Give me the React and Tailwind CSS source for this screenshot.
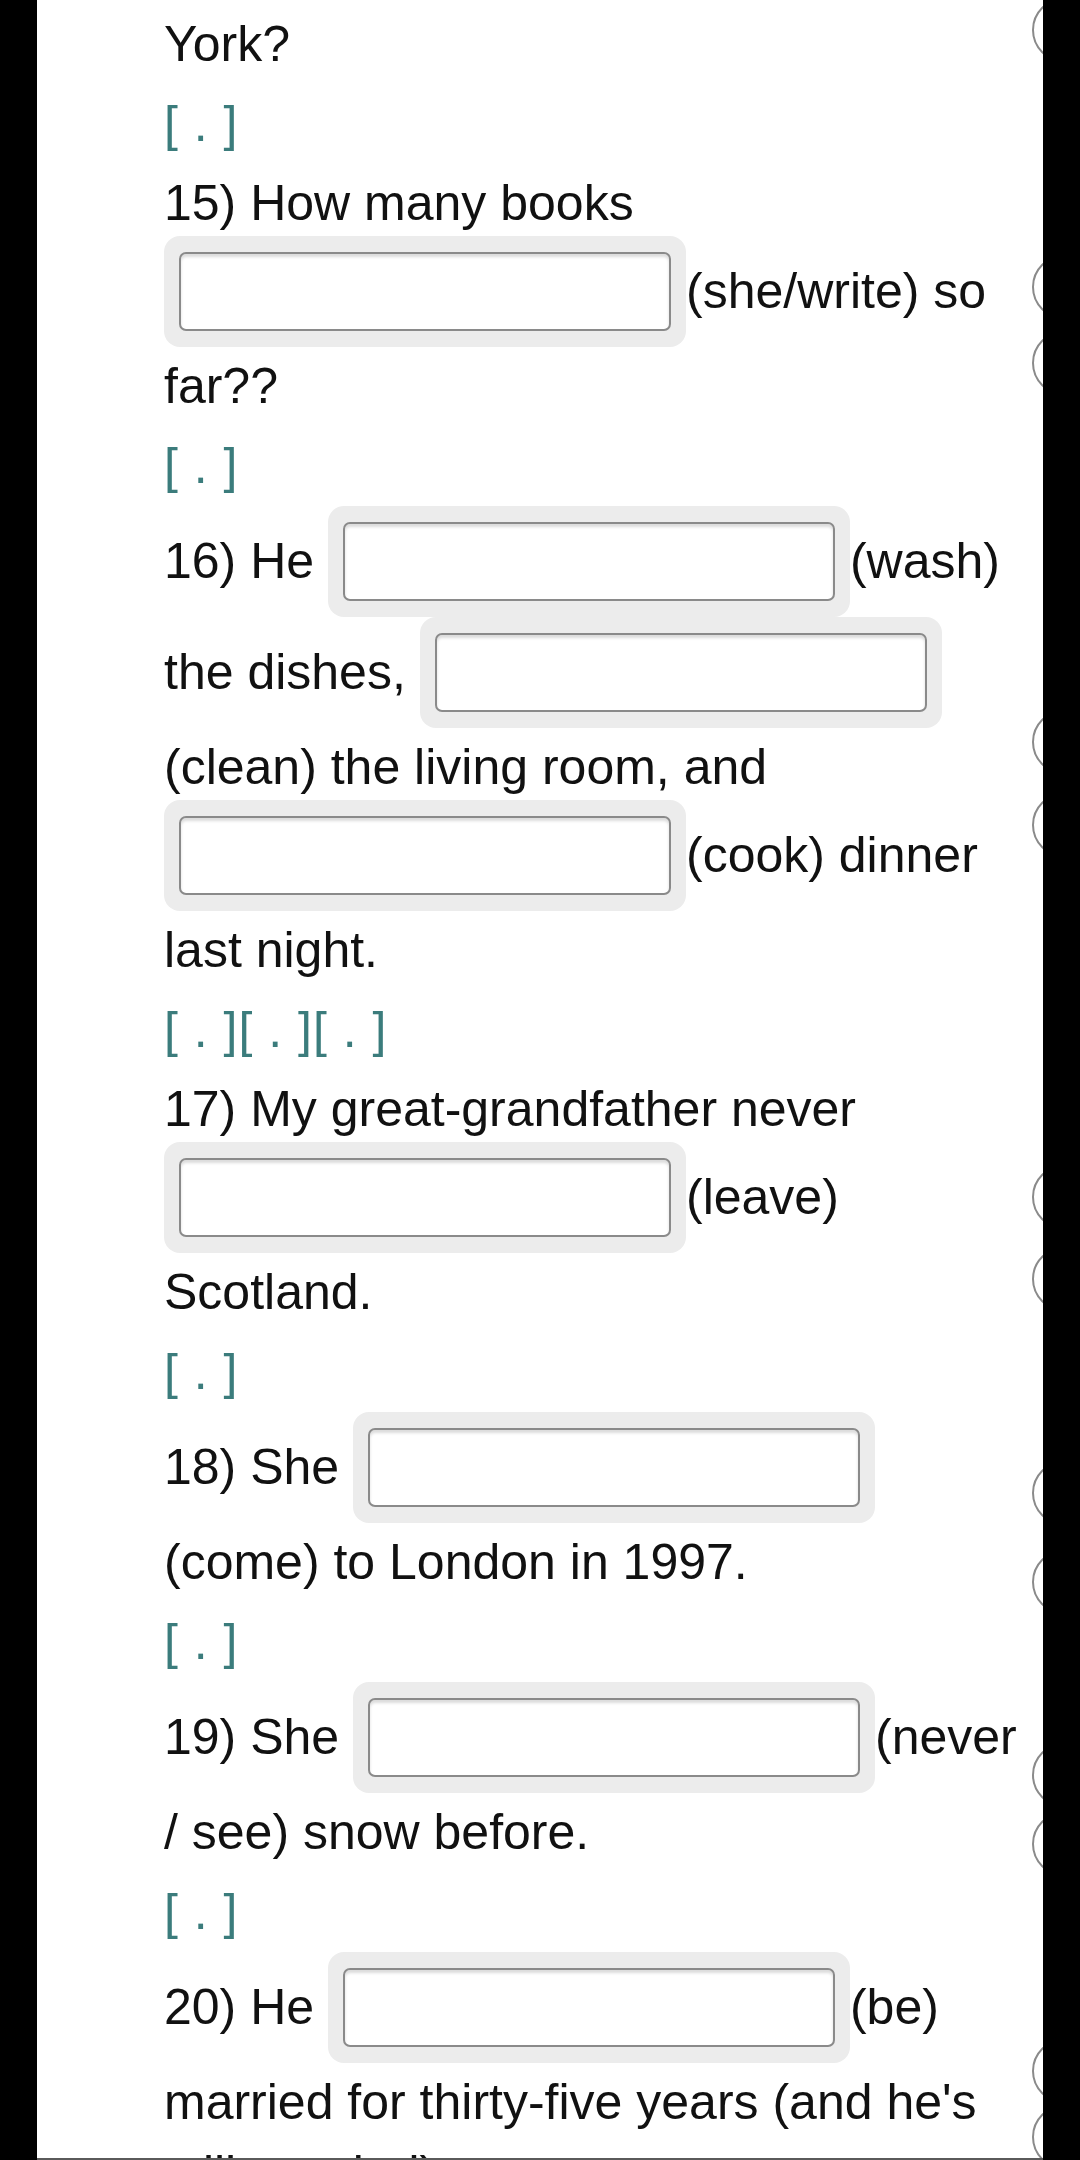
import React from "react";

function Blank() {
  return (
    <span className="relative -top-[3px] inline-block align-middle px-[15px] py-[16px] rounded-[16px] bg-[#ececec]">
      <input
        type="text"
        aria-label="answer"
        readOnly
        className="block w-[492px] h-[79px] rounded-[7px] border-2 border-[#8a8a8a] bg-white shadow-[inset_0_3px_3px_rgba(0,0,0,0.14)] outline-none"
      />
    </span>
  );
}

function Marks({ children }) {
  return (
    <div className="mt-[8px] mb-[7px] text-[#3b7c7c] tracking-[1px] whitespace-pre leading-[72px]">
      {children}
    </div>
  );
}

function Q({ children }) {
  return <p className="leading-[72px]">{children}</p>;
}

function Ring({ className }) {
  return (
    <div
      className={
        "w-[64px] h-[64px] shrink-0 rounded-full border-2 border-[#8a8a8a] " +
        className
      }
    />
  );
}

export default function App() {
  return (
    <div className="w-[1080px] h-[2160px] overflow-hidden bg-black flex">
      <div className="w-[37px] shrink-0" />
      <div className="relative w-[1006px] h-[2160px] shrink-0 bg-white overflow-hidden flex">
        <div
          className="ml-[127px] w-[856px] shrink-0 pt-[8px] text-[50px] text-[#111111]"
          style={{ fontFamily: '"Liberation Sans", Arial, Helvetica, sans-serif' }}
        >
          <Q>York?</Q>
          <Marks>{"[ . ]"}</Marks>

          <Q>
            15) How many books <Blank />(she/write) so far??
          </Q>
          <Marks>{"[ . ]"}</Marks>

          <Q>
            16) He <Blank />(wash) the dishes, <Blank />(clean) the living room, and <Blank />(cook) dinner last night.
          </Q>
          <Marks>{"[ . ][ . ][ . ]"}</Marks>

          <Q>
            17) My great-grandfather never <Blank />(leave) Scotland.
          </Q>
          <Marks>{"[ . ]"}</Marks>

          <Q>
            18) She <Blank />(come) to London in 1997.
          </Q>
          <Marks>{"[ . ]"}</Marks>

          <Q>
            19) She <Blank />(never / see) snow before.
          </Q>
          <Marks>{"[ . ]"}</Marks>

          <Q>
            20) He <Blank />(be) married for thirty-five years (and he's still married).
          </Q>
          <Marks>{"[ . ]"}</Marks>
        </div>

        <div className="ml-[12px] w-[11px] shrink-0 overflow-hidden flex flex-col">
          <Ring className="-mt-[2px]" />
          <Ring className="mt-[193px]" />
          <Ring className="mt-[12px]" />
          <Ring className="mt-[315px]" />
          <Ring className="mt-[19px]" />
          <Ring className="mt-[308px]" />
          <Ring className="mt-[18px]" />
          <Ring className="mt-[150px]" />
          <Ring className="mt-[25px]" />
          <Ring className="mt-[129px]" />
          <Ring className="mt-[5px]" />
          <Ring className="mt-[163px]" />
          <Ring className="mt-[2px]" />
        </div>

        <div className="absolute left-0 right-0 bottom-0 h-[2px] bg-[#5a5a5a]" />
      </div>
    </div>
  );
}
